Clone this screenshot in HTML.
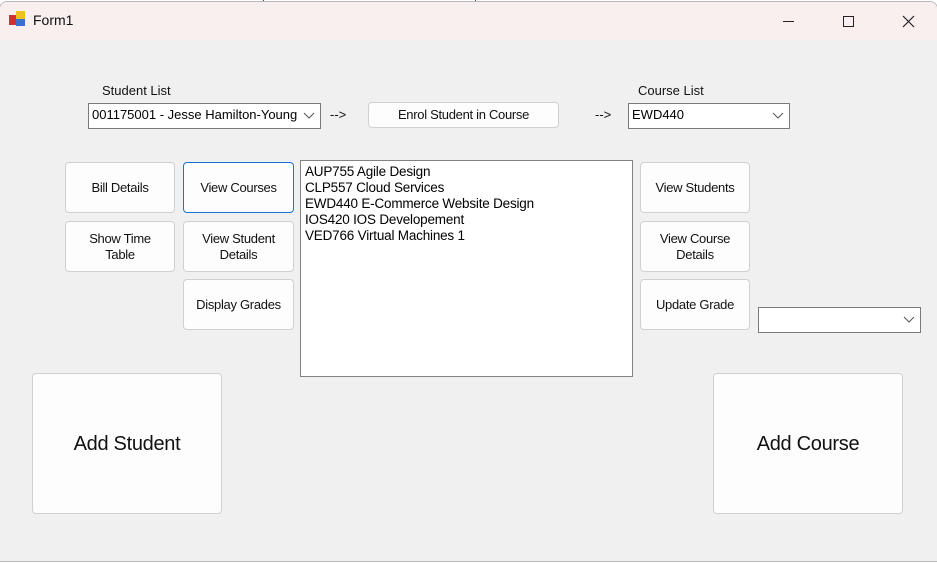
<!DOCTYPE html>
<html><head><style>
body{margin:0;width:937px;height:563px;background:#fff;position:relative;overflow:hidden;font-family:"Liberation Sans",sans-serif;}
.win{position:absolute;left:-1px;top:1px;width:937px;height:559px;background:#f0f0f0;border:1px solid #b8b8b8;border-radius:8px 8px 0 0;overflow:hidden;}
.tb{position:absolute;left:0;top:0;width:100%;height:38px;background:#f9efee;}
.a{position:absolute;}
.btn{position:absolute;background:#fdfdfd;border:1px solid #d0d0d0;border-radius:4px;font-size:13px;color:#111;display:flex;align-items:center;justify-content:center;text-align:center;line-height:16px;box-sizing:border-box;letter-spacing:-0.3px}
.cb{position:absolute;background:#fff;border:1px solid #7a7a7a;box-sizing:border-box;font-size:13px;padding:3px 3px;white-space:nowrap;overflow:hidden;}
.lbl{position:absolute;font-size:13px;color:#111;}
</style></head><body>
<div class="a" style="left:263px;top:0;width:1px;height:3px;background:#444"></div>
<div class="a" style="left:475px;top:0;width:1px;height:3px;background:#444"></div>
<div class="win">
<div class="tb"></div>
<svg class="a" style="left:9px;top:9px" width="18" height="16"><rect x="0" y="4" width="7" height="10" fill="#c33"/><rect x="7" y="0" width="9" height="8" fill="#f0c020"/><rect x="7" y="8" width="9" height="7" fill="#3a6fd0"/></svg>
<div class="lbl" style="left:33px;top:10px;font-size:14px">Form1</div>
<svg class="a" style="left:783px;top:12px" width="140" height="16"><line x1="0" y1="7.5" x2="11" y2="7.5" stroke="#222"/><rect x="60.5" y="2.5" width="10" height="10" fill="none" stroke="#222"/><path d="M120 2L131 13M131 2L120 13" stroke="#222" stroke-width="1.2"/></svg>
<div class="lbl" style="left:102px;top:81px">Student List</div>
<div class="cb" style="left:88px;top:101px;width:233px;height:26px">001175001 - Jesse Hamilton-Young</div>
<div class="a" style="left:298px;top:102px;width:22px;height:24px;background:#fff"></div>
<svg class="a" style="left:303px;top:110px" width="12" height="8"><path d="M1 1L6 6L11 1" fill="none" stroke="#555"/></svg>
<div class="lbl" style="left:330px;top:105px">--&gt;</div>
<div class="btn" style="left:368px;top:100px;width:191px;height:26px">Enrol Student in Course</div>
<div class="lbl" style="left:595px;top:105px">--&gt;</div>
<div class="lbl" style="left:638px;top:81px">Course List</div>
<div class="cb" style="left:628px;top:101px;width:162px;height:26px">EWD440</div>
<svg class="a" style="left:772px;top:110px" width="12" height="8"><path d="M1 1L6 6L11 1" fill="none" stroke="#555"/></svg>
<div class="btn" style="left:65px;top:160px;width:110px;height:51px">Bill Details</div>
<div class="btn" style="left:183px;top:160px;width:111px;height:51px;border-color:#1a73d0">View Courses</div>
<div class="btn" style="left:65px;top:219px;width:110px;height:51px">Show Time<br>Table</div>
<div class="btn" style="left:183px;top:219px;width:111px;height:51px">View Student<br>Details</div>
<div class="btn" style="left:183px;top:277px;width:111px;height:51px">Display Grades</div>
<div class="a" style="left:300px;top:158px;width:333px;height:217px;background:#fff;border:1px solid #828282;box-sizing:border-box;font-size:13.5px;line-height:16px;padding:3px 4px;letter-spacing:-0.2px">AUP755 Agile Design<br>CLP557 Cloud Services<br>EWD440 E-Commerce Website Design<br>IOS420 IOS Developement<br>VED766 Virtual Machines 1</div>
<div class="btn" style="left:640px;top:160px;width:110px;height:51px">View Students</div>
<div class="btn" style="left:640px;top:219px;width:110px;height:51px">View Course<br>Details</div>
<div class="btn" style="left:640px;top:277px;width:110px;height:51px">Update Grade</div>
<div class="cb" style="left:758px;top:305px;width:163px;height:26px"></div>
<svg class="a" style="left:903px;top:314px" width="12" height="8"><path d="M1 1L6 6L11 1" fill="none" stroke="#555"/></svg>
<div class="btn" style="left:32px;top:371px;width:190px;height:141px;font-size:20px">Add Student</div>
<div class="btn" style="left:713px;top:371px;width:190px;height:141px;font-size:20px">Add Course</div>
</div>
</body></html>
